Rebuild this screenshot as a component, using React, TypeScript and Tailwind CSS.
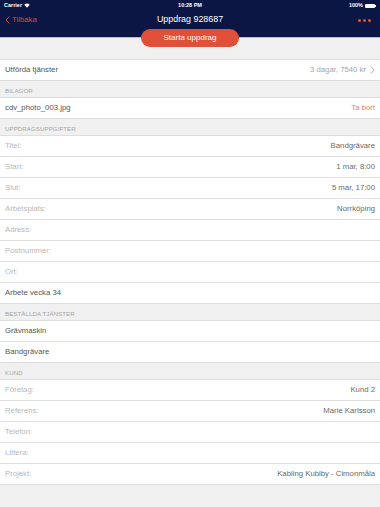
import React from "react";

const font = { fontFamily: '"Liberation Sans", Arial, sans-serif' };

function Row({ label, value, labelMuted = true, valueClass = "text-[#6a6a6a]", children }: { label: string; value?: string; labelMuted?: boolean; valueClass?: string; children?: React.ReactNode }) {
  return (
    <div className="flex h-[21px] items-center justify-between border-b border-[#dedede] bg-white pl-[5px] pr-[5px] text-[7.75px]">
      <span className={labelMuted ? "text-[#b8b8b8]" : "text-[#555]"}>{label}</span>
      {children ?? (value ? <span className={valueClass}>{value}</span> : null)}
    </div>
  );
}

function Header({ title }: { title: string }) {
  return (
    <div className="flex h-[17px] items-end border-b border-[#dedede] pb-[2px] pl-[5px] text-[6.1px] tracking-[0.1px] text-[#a6a6a6]">
      {title}
    </div>
  );
}

export default function App() {
  return (
    <div className="relative h-[507px] w-[380px] overflow-hidden bg-[#f0f0f0]" style={font}>
      {/* Nav bar */}
      <div className="relative h-[38px] border-b border-[#b9bbc6] bg-[#0c1645]">
        {/* status bar */}
        <div className="flex h-[11px] items-center justify-between px-[4px] text-[5.5px] font-bold text-white">
          <div className="flex items-center gap-[2px]">
            <span>Carrier</span>
            <svg width="6" height="5" viewBox="0 0 12 9">
              <path d="M6 9 L0.5 3 A8 8 0 0 1 11.5 3 Z" fill="white" />
            </svg>
          </div>
          <span className="absolute left-1/2 -translate-x-1/2">10:28 PM</span>
          <div className="flex items-center gap-[2px]">
            <span>100%</span>
            <div className="flex items-center">
              <div className="h-[4px] w-[10px] rounded-[1px] bg-white" />
              <div className="h-[2px] w-[1px] bg-white" />
            </div>
          </div>
        </div>
        {/* title row */}
        <div className="relative flex h-[18px] items-center justify-between pl-[5px] pr-[9px]">
          <div className="flex items-center gap-[2px] text-[7.75px] text-[#dd4636]">
            <svg width="5" height="8" viewBox="0 0 5 8">
              <path d="M4.2 0.5 L1 4 L4.2 7.5" fill="none" stroke="#dd4636" strokeWidth="1" />
            </svg>
            <span>Tilbaka</span>
          </div>
          <span className="absolute left-1/2 -translate-x-1/2 text-[8.9px] text-white">Uppdrag 928687</span>
          <div className="flex items-center gap-[2px]">
            <div className="h-[3px] w-[3px] rounded-full bg-[#e2502f]" />
            <div className="h-[3px] w-[3px] rounded-full bg-[#e2502f]" />
            <div className="h-[3px] w-[3px] rounded-full bg-[#e2502f]" />
          </div>
        </div>
        <button className="absolute left-[141px] top-[29px] flex h-[18px] w-[98px] items-center justify-center rounded-full bg-[#e04f37] text-[8px] text-white">
          Starta uppdrag
        </button>
      </div>

      <div className="h-[21px]" />

      <div className="border-t border-[#dedede]">
        <Row label="Utförda tjänster" labelMuted={false}>
          <div className="flex items-center gap-[4px] text-[#a5a5a5]">
            <span>3 dagar, 7540 kr</span>
            <svg width="5" height="8" viewBox="0 0 5 8">
              <path d="M0.8 0.5 L4.2 4 L0.8 7.5" fill="none" stroke="#9a9a9a" strokeWidth="0.8" />
            </svg>
          </div>
        </Row>
      </div>

      <Header title="BILAGOR" />
      <Row label="cdv_photo_003.jpg" labelMuted={false} value="Ta bort" valueClass="text-[#eb7b6a]" />

      <Header title="UPPDRAGSUPPGIFTER" />
      <Row label="Titel:" value="Bandgrävare" />
      <Row label="Start:" value="1 mar, 8:00" />
      <Row label="Slut:" value="5 mar, 17:00" />
      <Row label="Arbetsplats:" value="Norrköping" />
      <Row label="Adress:" />
      <Row label="Postnummer:" />
      <Row label="Ort:" />
      <Row label="Arbete vecka 34" labelMuted={false} />

      <Header title="BESTÄLLDA TJÄNSTER" />
      <Row label="Grävmaskin" labelMuted={false} />
      <Row label="Bandgrävare" labelMuted={false} />

      <Header title="KUND" />
      <Row label="Företag:" value="Kund 2" />
      <Row label="Referens:" value="Marie Karlsson" />
      <Row label="Telefon:" />
      <Row label="Littera:" />
      <Row label="Projekt:" value="Kabling Kubiby - Cimonmåla" />
    </div>
  );
}
